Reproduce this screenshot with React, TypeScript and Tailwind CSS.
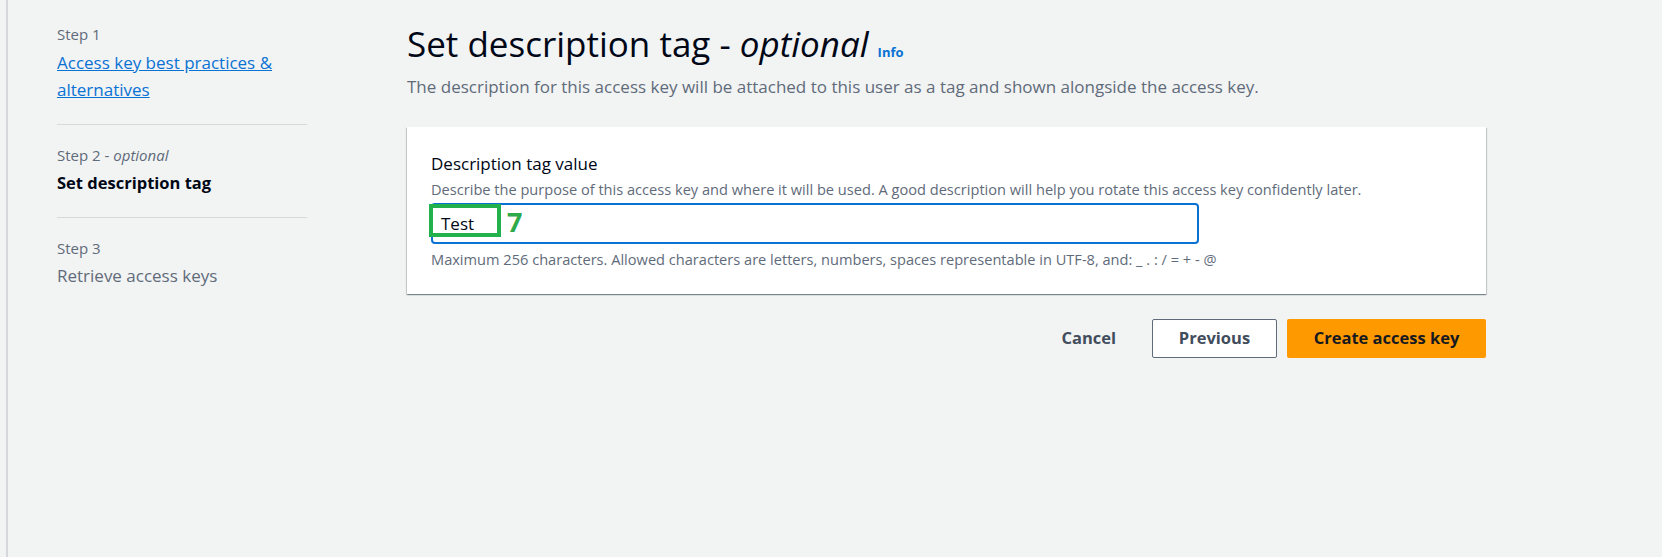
const font = { fontFamily: "'Open Sans', 'Liberation Sans', sans-serif" };

const Nav = () => (
  <nav className="w-[250px] pt-[24px] shrink-0">
    <div className="pb-[21px] border-b border-[#d5dbdb]">
      <div className="text-[15px] leading-[20px] text-[#5f6b7a]">Step 1</div>
      <a href="#" className="block mt-[5px] text-[17px] leading-[27px] text-[#0972d3] underline">
        Access key best practices &amp; alternatives
      </a>
    </div>
    <div className="pt-[20px] pb-[22px] border-b border-[#d5dbdb]">
      <div className="text-[15px] leading-[20px] text-[#5f6b7a]">
        Step 2 - <i>optional</i>
      </div>
      <div className="mt-[6px] text-[16.5px] leading-[24px] font-bold text-[#000716]">Set description tag</div>
    </div>
    <div className="pt-[20px]">
      <div className="text-[15px] leading-[20px] text-[#5f6b7a]">Step 3</div>
      <div className="mt-[6px] text-[17px] leading-[24px] text-[#5f6b7a]">Retrieve access keys</div>
    </div>
  </nav>
);

export default function App() {
  return (
    <div className="w-[1662px] h-[557px] bg-[#f2f3f3] flex overflow-hidden" style={font}>
      <div className="ml-[6px] w-[2px] bg-[#d5d8da] shrink-0" />
      <div className="pl-[49px] flex">
        <Nav />
        <main className="ml-[100px] w-[1079px] pt-[22px]">
          <div className="flex items-baseline gap-[9px]">
            <h1 className="text-[35px] leading-[44px] text-[#000716]">
              Set description tag - <i>optional</i>
            </h1>
            <a href="#" className="text-[13px] font-bold text-[#0972d3]">Info</a>
          </div>
          <p className="mt-[9px] text-[17px] leading-[24px] text-[#5f6b7a]">
            The description for this access key will be attached to this user as a tag and shown alongside the access key.
          </p>

          <section className="mt-[28px] bg-white px-[24px] pt-[25px] pb-[25px] shadow-[0_1px_1px_0_rgba(0,28,36,0.3),1px_1px_1px_0_rgba(0,28,36,0.15),-1px_1px_1px_0_rgba(0,28,36,0.15)]">
            <label className="block text-[17px] leading-[24px] text-[#000716]">Description tag value</label>
            <div className="mt-[3px] text-[14.6px] leading-[20px] text-[#5f6b7a]">
              Describe the purpose of this access key and where it will be used. A good description will help you rotate this access key confidently later.
            </div>
            <div className="relative mt-[4px] w-[768px] h-[41px] border-2 border-[#0972d3] rounded-[4px] flex items-center pl-[8px]">
              <span className="text-[17px] text-[#000716]">Test</span>
              <div className="absolute left-[-4px] top-[-1px] w-[72px] h-[33px] border-[4px] border-[#22b14c]" />
              <span className="absolute left-[74px] top-[0px] text-[27px] leading-[34px] font-bold text-[#2eaa4a]">7</span>
            </div>
            <div className="mt-[5px] text-[14.6px] leading-[20px] text-[#5f6b7a]">
              Maximum 256 characters. Allowed characters are letters, numbers, spaces representable in UTF-8, and: _ . : / = + - @
            </div>
          </section>

          <div className="mt-[25px] flex justify-end items-center">
            <button className="px-[20px] h-[39px] text-[16.5px] font-bold text-[#414d5c]">Cancel</button>
            <button className="ml-[16px] w-[125px] h-[39px] border border-[#5f6b7a] rounded-[2px] bg-white text-[16.5px] font-bold text-[#414d5c]">
              Previous
            </button>
            <button className="ml-[10px] w-[199px] h-[39px] rounded-[2px] bg-[#ff9900] text-[16.5px] font-bold text-[#16191f]">
              Create access key
            </button>
          </div>
        </main>
      </div>
    </div>
  );
}
